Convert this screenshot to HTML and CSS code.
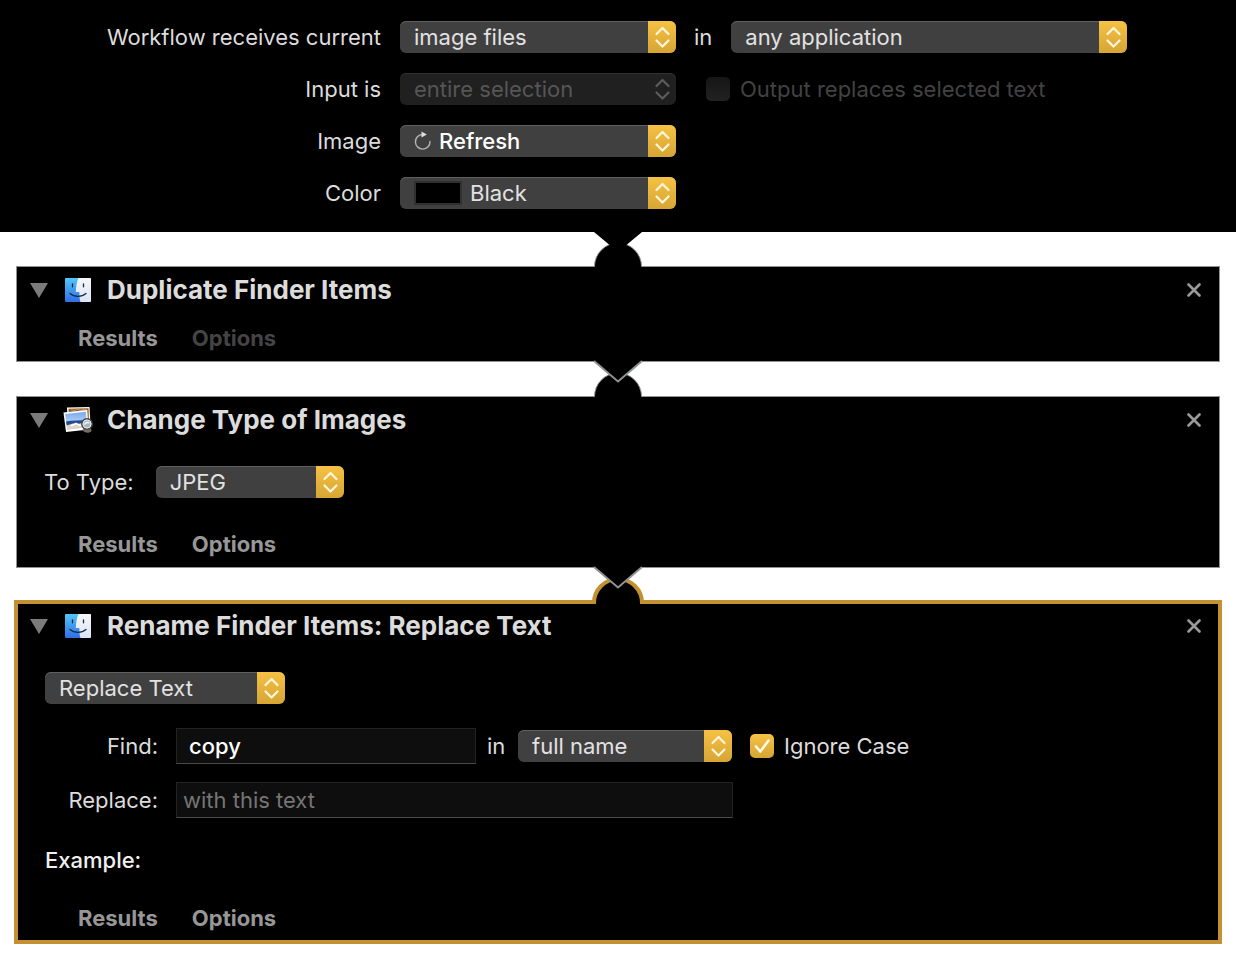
FILE: index.html
```html
<!DOCTYPE html>
<html lang="en">
<head>
<meta charset="utf-8">
<meta name="viewport" content="width=device-width, initial-scale=1">
<title>Workflow</title>
<link rel="stylesheet" href="styles.css">
</head>
<body>
<svg class="defs" width="0" height="0" aria-hidden="true">
  <defs>
    <linearGradient id="finder-blue" x1="0" y1="0" x2="0" y2="1">
      <stop offset="0" stop-color="#52c6fa"/><stop offset="1" stop-color="#2f6fe6"/>
    </linearGradient>
    <linearGradient id="finder-white" x1="0" y1="0" x2="0" y2="1">
      <stop offset="0" stop-color="#f7f7f9"/><stop offset="1" stop-color="#dbe5f3"/>
    </linearGradient>
    <linearGradient id="photo-sky" x1="0" y1="0" x2="0" y2="1">
      <stop offset="0" stop-color="#79a9ee"/><stop offset="1" stop-color="#dceafa"/>
    </linearGradient>
    <symbol id="chevrons" viewBox="0 0 28 32">
      <path d="M8.500 13 14.500 7l6 6M8.500 19.500l6 6 6-6" fill="none" stroke="currentColor" stroke-width="2.200" stroke-linecap="round" stroke-linejoin="round"/>
    </symbol>
    <symbol id="cross" viewBox="0 0 14 14">
      <path d="M1.500 1.500l11 11M12.500 1.500l-11 11" stroke="currentColor" stroke-width="2.600" stroke-linecap="round"/>
    </symbol>
    <symbol id="triangle" viewBox="0 0 18 15">
      <path d="M0 0h18L9 15z" fill="currentColor"/>
    </symbol>
    <symbol id="finder" viewBox="0 0 26 24">
      <rect width="26" height="24" rx="1" fill="url(#finder-blue)"/>
      <path d="M13.500 0H25a1 1 0 0 1 1 1v22a1 1 0 0 1-1 1h-9.500c-.6-1.800-.9-3.300-1-5.200l-.2-4.800h-3.500C11 8.500 11.800 4 13.500 0z" fill="url(#finder-white)"/>
      <path d="M7.500 6v2.800M18.500 6v2.800" stroke="#16263c" stroke-width="1.300" stroke-linecap="round"/>
      <path d="M5 15.500c4.300 3.800 11.700 3.800 16 0" fill="none" stroke="#16263c" stroke-width="1.200" stroke-linecap="round"/>
    </symbol>
    <symbol id="photos" viewBox="0 0 30 26">
      <path d="M4 .5 26.500 0l1 18L5 19z" fill="#fff"/>
      <path d="M5.500 1.800 25.500 1.300l.8 14L6 17z" fill="#8b5f2b"/>
      <path d="M8 2.500l3 1 3-1.500 4 1.500 4-1.500 3 2v8" fill="none" stroke="#c9975a" stroke-width="1"/>
      <path d="M.5 5.500 24 3l2 19.500L3 25z" fill="#fff"/>
      <path d="M2.200 7 22.800 4.800l1.500 15.500L4.200 22.800z" fill="url(#photo-sky)"/>
      <path d="M3 14.500l5-.8 15.500-.8.4 4L3.700 18.500z" fill="#244a91"/>
      <path d="M3.700 18.500l6-2 5 .5 9-2 .6 5.300L4.200 22.800z" fill="#dcd5c7"/>
      <path d="M8 19l5-2.500 4 2 5-1.500" fill="none" stroke="#fff" stroke-width="1.600"/>
      <path d="M19.500 23l2-3h6l1 4c-1.800 2.500-7 2.500-9-1z" fill="#776e61"/>
      <circle cx="24" cy="17" r="5.200" fill="#aab6bf" stroke="#43474a" stroke-width="1.500"/>
      <circle cx="24" cy="17" r="4" fill="none" stroke="#e8e8e8" stroke-width="1"/>
      <path d="M21.500 17.500l2-2 3 .5" fill="none" stroke="#fff" stroke-width="1.200"/>
    </symbol>
  </defs>
</svg>

<header class="settings">
  <label class="settings-label" for="receives">Workflow receives current</label>
  <div class="controls">
    <span class="popup popup-medium">
      <select id="receives"><option>image files</option></select>
      <svg class="popup-arrows"><use href="#chevrons"/></svg>
    </span>
    <label class="joiner" for="application">in</label>
    <span class="popup popup-wide">
      <select id="application"><option>any application</option></select>
      <svg class="popup-arrows"><use href="#chevrons"/></svg>
    </span>
  </div>

  <label class="settings-label" for="input-is">Input is</label>
  <div class="controls">
    <span class="popup popup-medium">
      <select id="input-is" disabled><option>entire selection</option></select>
      <svg class="popup-arrows"><use href="#chevrons"/></svg>
    </span>
    <label class="check check-disabled">
      <input type="checkbox" disabled>
      Output replaces selected text
    </label>
  </div>

  <label class="settings-label" for="image">Image</label>
  <div class="controls">
    <span class="popup popup-medium popup-refresh">
      <svg class="refresh-icon" viewBox="0 0 18 20"><path d="M8.500 3.500A7.300 7.300 0 1 0 16 10.500" fill="none" stroke="#b4b4b4" stroke-width="1.400" stroke-linecap="round"/><path d="M7.500 0.500 12.800 3.500 7.500 6.500z" fill="#dedede"/></svg>
      <select id="image"><option>Refresh</option></select>
      <svg class="popup-arrows"><use href="#chevrons"/></svg>
    </span>
  </div>

  <label class="settings-label" for="color">Color</label>
  <div class="controls">
    <span class="popup popup-medium popup-color">
      <span class="swatch"></span>
      <select id="color"><option>Black</option></select>
      <svg class="popup-arrows"><use href="#chevrons"/></svg>
    </span>
  </div>
</header>

<main class="workflow">
  <div class="link">
    <svg viewBox="0 0 56 34" aria-hidden="true">
      <path class="link-line" d="M4.500 35v-.5a23.500 23.500 0 0 1 47 0V35"/>
      <path d="M4-1v1l24 20L52 0v-1z"/>
    </svg>
  </div>

  <section class="action">
    <div class="action-head">
      <button class="icon-button disclosure" aria-label="Collapse"><svg><use href="#triangle"/></svg></button>
      <svg class="finder-icon"><use href="#finder"/></svg>
      <h2>Duplicate Finder Items</h2>
      <button class="icon-button close" aria-label="Remove"><svg><use href="#cross"/></svg></button>
    </div>
    <div class="action-foot"><button>Results</button><button disabled>Options</button></div>
  </section>

  <div class="link">
    <svg viewBox="0 0 56 34" aria-hidden="true">
      <path class="link-line" d="M4.500 35v-.5a23.500 23.500 0 0 1 47 0V35"/>
      <path class="link-line link-point" d="M4-1 28 19.500 52-1"/>
    </svg>
  </div>

  <section class="action">
    <div class="action-head">
      <button class="icon-button disclosure" aria-label="Collapse"><svg><use href="#triangle"/></svg></button>
      <svg class="photos-icon"><use href="#photos"/></svg>
      <h2>Change Type of Images</h2>
      <button class="icon-button close" aria-label="Remove"><svg><use href="#cross"/></svg></button>
    </div>
    <div class="action-body">
      <div class="controls type-row">
        <label for="to-type">To Type:</label>
        <span class="popup popup-type">
          <select id="to-type"><option>JPEG</option></select>
          <svg class="popup-arrows"><use href="#chevrons"/></svg>
        </span>
      </div>
    </div>
    <div class="action-foot"><button>Results</button><button>Options</button></div>
  </section>

  <div class="link link-selected">
    <svg viewBox="0 0 56 32" aria-hidden="true">
      <path class="link-line-selected" d="M4 36v-1a24 24 0 0 1 48 0v1"/>
      <path class="link-line link-point" d="M4-1 28 19.500 52-1"/>
    </svg>
  </div>

  <section class="action action-selected">
    <div class="action-head">
      <button class="icon-button disclosure" aria-label="Collapse"><svg><use href="#triangle"/></svg></button>
      <svg class="finder-icon"><use href="#finder"/></svg>
      <h2>Rename Finder Items: Replace Text</h2>
      <button class="icon-button close" aria-label="Remove"><svg><use href="#cross"/></svg></button>
    </div>
    <div class="action-body rename-body">
      <span class="popup popup-mode">
        <select aria-label="Rename operation"><option>Replace Text</option></select>
        <svg class="popup-arrows"><use href="#chevrons"/></svg>
      </span>
      <div class="rename-fields">
        <label for="find">Find:</label>
        <div class="controls">
          <input class="field field-find" id="find" type="text" value="copy">
          <label class="find-in" for="scope">in</label>
          <span class="popup popup-scope">
            <select id="scope"><option>full name</option></select>
            <svg class="popup-arrows"><use href="#chevrons"/></svg>
          </span>
          <label class="check check-case">
            <input type="checkbox" checked>
            <svg class="tick" viewBox="0 0 24 24"><path d="M6 12.500l4.300 5L18.500 6.500" fill="none" stroke="#fff8e4" stroke-width="2.600" stroke-linecap="round" stroke-linejoin="round"/></svg>
            Ignore Case
          </label>
        </div>
        <label for="replace">Replace:</label>
        <input class="field field-replace" id="replace" type="text" placeholder="with this text">
      </div>
      <p class="example">Example:</p>
    </div>
    <div class="action-foot"><button>Results</button><button>Options</button></div>
  </section>
</main>
</body>
</html>
```

FILE: styles.css
```css
:root {
  --text: #dcdcdc;
  --line: #8f938f;
  --accent: #c39132;
  --gold: linear-gradient(#f5c243, #d6a535);
}

* {
  box-sizing: border-box;
}

body {
  margin: 0;
  background: #fff;
  color: var(--text);
  font: 400 22px/32px Inter, "Liberation Sans", sans-serif;
}

button,
input,
select {
  font: inherit;
}

.defs {
  position: absolute;
}

.settings {
  display: grid;
  grid-template-columns: 381px 1fr;
  gap: 20px 19px;
  padding: 21px 16px 23px 0;
  background: #000;
}

.settings-label {
  text-align: right;
}

.controls {
  display: flex;
  align-items: center;
}

/* Pop-up menus */

.popup {
  display: block;
  position: relative;
  height: 32px;
}

.popup select {
  appearance: none;
  display: block;
  width: 100%;
  height: 32px;
  margin: 0;
  padding: 0 32px 0 14px;
  border: 0;
  border-radius: 6px;
  background: #404040;
  box-shadow: inset 0 1px #606060;
  color: #e2e2e2;
  line-height: 32px;
}

.popup-arrows {
  position: absolute;
  top: 0;
  right: 0;
  width: 28px;
  height: 32px;
  border-radius: 0 6px 6px 0;
  background: var(--gold);
  color: #fff6dc;
  pointer-events: none;
}

.popup select:disabled {
  background: #202020;
  box-shadow: inset 0 1px #303030;
  color: #565656;
  opacity: 1;
}

.popup select:disabled + .popup-arrows {
  background: none;
  color: #5c5c5c;
}

.popup-medium {
  width: 276px;
}

.popup-wide {
  width: 396px;
}

.popup-type {
  width: 188px;
}

.popup-mode {
  width: 240px;
}

.popup-scope {
  width: 214px;
}

.popup-refresh select {
  padding-left: 39px;
  color: #fff;
  font-weight: 500;
}

.refresh-icon {
  position: absolute;
  top: 6px;
  left: 14px;
  width: 18px;
  height: 20px;
}

.popup-color select {
  padding-left: 70px;
}

.swatch {
  position: absolute;
  top: 4px;
  left: 14px;
  width: 48px;
  height: 24px;
  border: 2px solid #303030;
  background: #000;
}

.joiner {
  padding: 0 19px 0 18px;
}

/* Tick boxes */

.check {
  display: flex;
  position: relative;
  align-items: center;
  gap: 10px;
}

.check input {
  appearance: none;
  width: 24px;
  height: 24px;
  margin: 0;
  border-radius: 5px;
  background: linear-gradient(#161616, #222);
}

.check input:checked {
  background: var(--gold);
}

.check-disabled {
  margin-left: 30px;
  color: #424242;
}

.check-case {
  margin-left: 18px;
}

.tick {
  position: absolute;
  left: 0;
  width: 24px;
  height: 24px;
  pointer-events: none;
}

/* Connectors between actions */

.workflow {
  padding: 0 16px 22px;
}

.link {
  display: flex;
  position: relative;
  z-index: 1;
  justify-content: center;
  height: 34px;
  pointer-events: none;
}

.link-selected {
  height: 32px;
}

.link svg {
  width: 56px;
  height: 100%;
  overflow: visible;
}

.link-line {
  stroke: var(--line);
  stroke-width: 1;
}

.link-point {
  stroke-width: 2;
}

.link-line-selected {
  stroke: var(--accent);
  stroke-width: 4;
}

/* Actions */

.action {
  padding: 7px 15px 7px 12px;
  border: 1px solid var(--line);
  background: #000;
}

.action-selected {
  margin: 0 -2px;
  padding: 6px 14px 6px 11px;
  border: 4px solid var(--accent);
}

.action-head {
  display: grid;
  grid-template-columns: 20px 30px 1fr 20px;
  align-items: center;
  column-gap: 14px;
}

.action-head h2 {
  margin: 0;
  font-size: 26px;
  font-weight: 700;
  line-height: 32px;
  font-optical-sizing: none;
}

.icon-button {
  display: flex;
  align-items: center;
  justify-content: center;
  width: 20px;
  height: 20px;
  padding: 0;
  border: 0;
  background: none;
}

.disclosure {
  color: #7b7b7b;
}

.disclosure svg {
  width: 18px;
  height: 15px;
}

.close {
  color: #9a9a9a;
}

.close svg {
  width: 14px;
  height: 14px;
}

.finder-icon {
  width: 26px;
  height: 24px;
  margin-left: 2px;
}

.photos-icon {
  width: 30px;
  height: 26px;
}

.action-body {
  padding: 30px 0 14px 15px;
}

.type-row {
  gap: 22px;
}

.rename-body {
  padding: 30px 0 10px 16px;
}

.rename-fields {
  display: grid;
  grid-template-columns: 113px 1fr;
  gap: 18px;
  align-items: center;
  margin: 24px 0 26px;
}

.rename-fields > label {
  text-align: right;
}

.field {
  height: 36px;
  padding: 0 6px;
  border: 1px solid #232323;
  border-bottom-color: #4a4a4a;
  border-radius: 0;
  background: #0e0e0e;
  color: #fff;
}

.field::placeholder {
  color: #757575;
  opacity: 1;
}

.field-find {
  width: 300px;
  padding: 0 12px;
  font-weight: 500;
}

.field-replace {
  width: 557px;
}

.find-in {
  width: 42px;
  padding-left: 11px;
}

.example {
  margin: 0;
  color: #f0f0f0;
  font-weight: 500;
}

.action-foot {
  display: flex;
  gap: 34px;
  padding: 16px 0 0 49px;
}

.action-foot button {
  height: 32px;
  padding: 0;
  border: 0;
  background: none;
  color: #979797;
  font-weight: 700;
  font-optical-sizing: none;
}

.action-foot button:disabled {
  color: #444;
}
```
